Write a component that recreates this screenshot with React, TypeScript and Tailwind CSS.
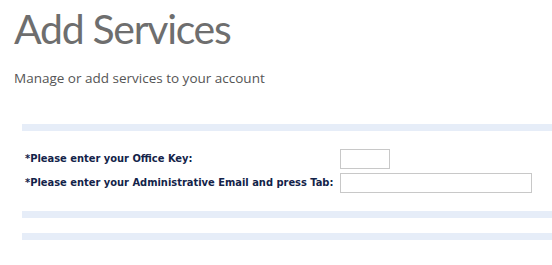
export default function App() {
  return (
    <div className="w-[552px] h-[265px] bg-white overflow-hidden">
      <div className="pl-[14px] pt-[5px]">
        <h1 className="text-[41px] leading-[48px] text-[#6e6e6e] font-['Lato',sans-serif] font-normal tracking-[-1.3px]">
          Add Services
        </h1>
        <p className="mt-[16px] text-[13.5px] leading-[18px] text-[#555555] font-['Open_Sans',sans-serif]">
          Manage or add services to your account
        </p>
      </div>
      <div className="ml-[22px] mt-[37px]">
        <div className="h-[7px] bg-[#e6edf8]" />
        <div className="pt-[18px] pl-[3px] font-['DejaVu_Sans_Condensed','DejaVu_Sans',sans-serif] font-bold text-[11px] text-[#132349] whitespace-nowrap">
          <div className="flex items-center h-[20px]">
            <span className="w-[315px]">*Please enter your Office Key:</span>
            <input className="w-[50px] h-[20px] border border-[#c8c8c8] bg-white outline-none" />
          </div>
          <div className="flex items-center h-[20px] mt-[4px]">
            <span className="w-[315px]">*Please enter your Administrative Email and press Tab:</span>
            <input className="w-[192px] h-[20px] border border-[#c8c8c8] bg-white outline-none" />
          </div>
        </div>
        <div className="h-[7px] bg-[#e6edf8] mt-[18px]" />
        <div className="h-[7px] bg-[#e6edf8] mt-[15px]" />
      </div>
    </div>
  );
}
